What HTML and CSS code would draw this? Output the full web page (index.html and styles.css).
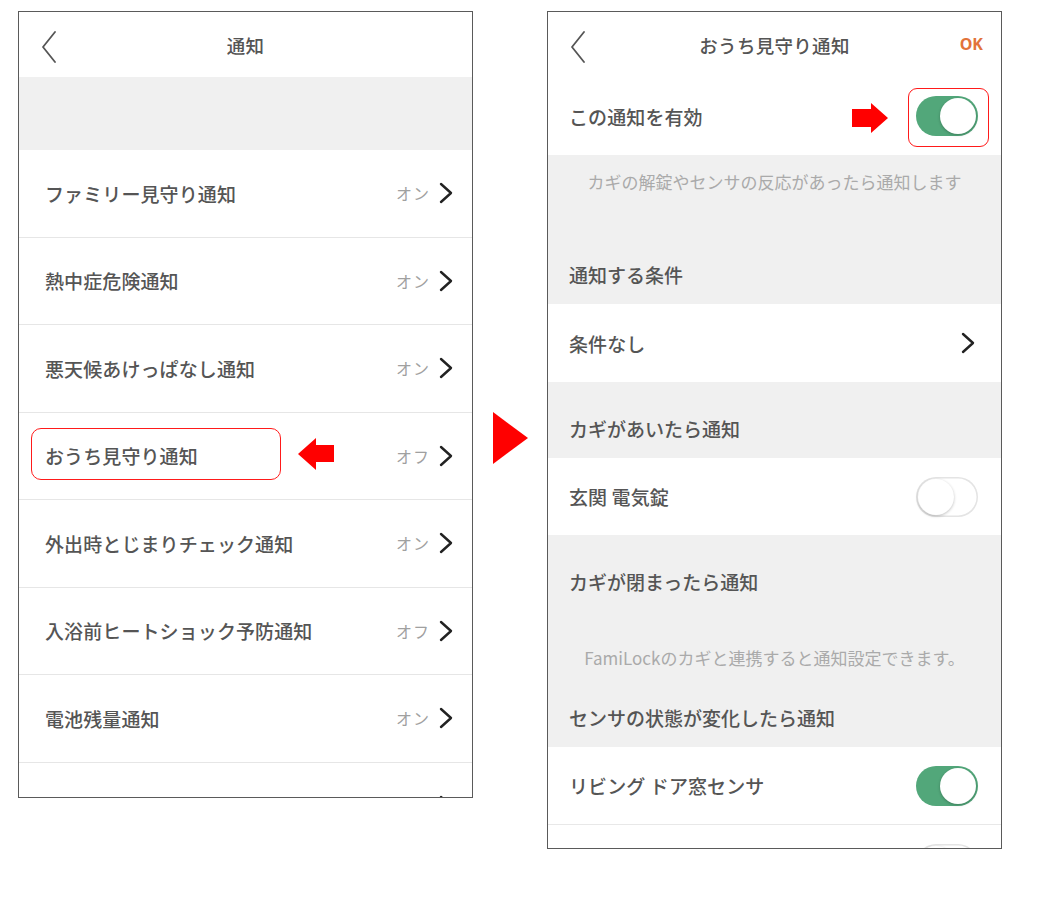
FILE: index.html
```html
<!DOCTYPE html>
<html lang="ja">
<head>
<meta charset="utf-8">
<title>通知</title>
<link rel="stylesheet" href="styles.css">
</head>
<body>
<div class="stage">
  <section class="phone phone-left">
    <header class="nav">
      <svg class="back" width="16" height="32" viewBox="0 0 16 32"><polyline points="14,1 2,16 14,31" fill="none" stroke="#555" stroke-width="1.8" stroke-linecap="round" stroke-linejoin="round"/></svg>
      <div class="nav-title">通知</div>
    </header>
    <div class="spacer-gray"></div>
    <div class="list-row"><span class="label">ファミリー見守り通知</span><span class="value">オン</span><svg class="chev" width="14" height="22" viewBox="0 0 14 22"><polyline points="2,2 12,11 2,20" fill="none" stroke="#222" stroke-width="2.4" stroke-linecap="round" stroke-linejoin="round"/></svg></div>
    <div class="list-row"><span class="label">熱中症危険通知</span><span class="value">オン</span><svg class="chev" width="14" height="22" viewBox="0 0 14 22"><polyline points="2,2 12,11 2,20" fill="none" stroke="#222" stroke-width="2.4" stroke-linecap="round" stroke-linejoin="round"/></svg></div>
    <div class="list-row"><span class="label">悪天候あけっぱなし通知</span><span class="value">オン</span><svg class="chev" width="14" height="22" viewBox="0 0 14 22"><polyline points="2,2 12,11 2,20" fill="none" stroke="#222" stroke-width="2.4" stroke-linecap="round" stroke-linejoin="round"/></svg></div>
    <div class="list-row"><span class="label">おうち見守り通知</span><span class="value">オフ</span><svg class="chev" width="14" height="22" viewBox="0 0 14 22"><polyline points="2,2 12,11 2,20" fill="none" stroke="#222" stroke-width="2.4" stroke-linecap="round" stroke-linejoin="round"/></svg>
      <div class="highlight highlight-left"></div>
      <svg class="arrow arrow-left" width="36" height="32" viewBox="0 0 36 32"><polygon points="0,16 18,0 18,7 36,7 36,24 18,24 18,32" fill="#ff0000"/></svg>
    </div>
    <div class="list-row"><span class="label">外出時とじまりチェック通知</span><span class="value">オン</span><svg class="chev" width="14" height="22" viewBox="0 0 14 22"><polyline points="2,2 12,11 2,20" fill="none" stroke="#222" stroke-width="2.4" stroke-linecap="round" stroke-linejoin="round"/></svg></div>
    <div class="list-row"><span class="label">入浴前ヒートショック予防通知</span><span class="value">オフ</span><svg class="chev" width="14" height="22" viewBox="0 0 14 22"><polyline points="2,2 12,11 2,20" fill="none" stroke="#222" stroke-width="2.4" stroke-linecap="round" stroke-linejoin="round"/></svg></div>
    <div class="list-row"><span class="label">電池残量通知</span><span class="value">オン</span><svg class="chev" width="14" height="22" viewBox="0 0 14 22"><polyline points="2,2 12,11 2,20" fill="none" stroke="#222" stroke-width="2.4" stroke-linecap="round" stroke-linejoin="round"/></svg></div>
    <div class="list-row"><span class="label"></span><svg class="chev" width="14" height="22" viewBox="0 0 14 22"><polyline points="2,2 12,11 2,20" fill="none" stroke="#222" stroke-width="2.4" stroke-linecap="round" stroke-linejoin="round"/></svg></div>
  </section>

  <div class="between">
    <svg width="35" height="52" viewBox="0 0 35 52"><polygon points="0,0 35,26 0,52" fill="#ff0000"/></svg>
  </div>

  <section class="phone phone-right">
    <header class="nav">
      <svg class="back" width="16" height="32" viewBox="0 0 16 32"><polyline points="14,1 2,16 14,31" fill="none" stroke="#555" stroke-width="1.8" stroke-linecap="round" stroke-linejoin="round"/></svg>
      <div class="nav-title">おうち見守り通知</div>
      <div class="nav-ok">OK</div>
    </header>
    <div class="set-row set-row-first">
      <span class="label">この通知を有効</span>
      <span class="toggle on"><span class="knob"></span></span>
      <svg class="arrow arrow-right" width="36" height="30" viewBox="0 0 36 30"><polygon points="0,6 19,6 19,0 36,15 19,30 19,24 0,24" fill="#ff0000"/></svg>
      <div class="highlight highlight-right"></div>
    </div>
    <div class="note note-top">カギの解錠やセンサの反応があったら通知します</div>
    <div class="sec-title">通知する条件</div>
    <div class="set-row"><span class="label">条件なし</span><svg class="chev chev-r" width="14" height="22" viewBox="0 0 14 22"><polyline points="2,2 12,11 2,20" fill="none" stroke="#222" stroke-width="2.4" stroke-linecap="round" stroke-linejoin="round"/></svg></div>
    <div class="sec-title">カギがあいたら通知</div>
    <div class="set-row set-row-77"><span class="label">玄関 電気錠</span><span class="toggle off"><span class="knob"></span></span></div>
    <div class="sec-title">カギが閉まったら通知</div>
    <div class="note note-mid">FamiLockのカギと連携すると通知設定できます。</div>
    <div class="sec-title">センサの状態が変化したら通知</div>
    <div class="set-row set-row-77 divided"><span class="label">リビング ドア窓センサ</span><span class="toggle on"><span class="knob"></span></span></div>
    <div class="set-row"><span class="label"></span><span class="toggle off"><span class="knob"></span></span></div>
  </section>
</div>
</body>
</html>
```

FILE: styles.css
```css
* { box-sizing: border-box; }
html, body { margin: 0; padding: 0; background: #fff; }
body {
  width: 1058px;
  height: 906px;
  overflow: hidden;
  font-family: "Noto Sans CJK JP", "Noto Sans", sans-serif;
  color: #555;
}
.stage {
  display: flex;
  align-items: flex-start;
  padding: 11px 0 0 18px;
}
.phone {
  width: 455px;
  border: 1px solid #5a5a5a;
  background: #fff;
  overflow: hidden;
  display: flex;
  flex-direction: column;
}
.phone-left { height: 787px; }
.phone-right { height: 838px; }
.between {
  width: 74px;
  display: flex;
  justify-content: center;
  padding-top: 401px;
}
.nav {
  position: relative;
  height: 65px;
  flex: none;
  display: flex;
  align-items: center;
  justify-content: center;
}
.back { position: absolute; left: 22px; top: 19px; }
.nav-title {
  font-size: 18.5px;
  font-weight: 500;
  color: #555;
  letter-spacing: 0.3px;
}
.nav-ok {
  position: absolute;
  right: 18px;
  top: 21px;
  font-family: "Noto Sans", sans-serif;
  font-weight: 700;
  font-size: 16px;
  color: #e2733a;
}
.spacer-gray { height: 73px; flex: none; background: #f0f0f0; }
.list-row {
  position: relative;
  height: 87.5px;
  flex: none;
  display: flex;
  align-items: center;
  padding: 0 19px 0 26px;
  border-bottom: 1px solid #e6e6e6;
}
.label {
  font-size: 19px;
  font-weight: 500;
  color: #555;
  flex: 1;
  letter-spacing: 0.1px;
}
.value {
  font-size: 16px;
  color: #a0a0a0;
  margin-right: 9px;
  letter-spacing: 1px;
}
.chev { flex: none; }
.highlight {
  position: absolute;
  border: 1.6px solid #ff1a1a;
  border-radius: 10px;
}
.highlight-left { left: 12px; top: 15px; width: 250px; height: 52px; }
.arrow { position: absolute; }
.arrow-left { left: 279px; top: 25px; }
.set-row {
  position: relative;
  height: 78px;
  flex: none;
  display: flex;
  align-items: center;
  padding: 0 23px 0 21px;
  background: #fff;
}
.set-row-77 { height: 77px; }
.divided { border-bottom: 1px solid #e8e8e8; height: 78px; }
.chev-r { margin-right: 3px; }
.arrow-right { left: 304px; top: 26px; }
.highlight-right { left: 360px; top: 11px; width: 81px; height: 59px; border-radius: 9px; }
.note {
  flex: none;
  background: #f0f0f0;
  text-align: center;
  font-size: 17px;
  color: #aaa;
  line-height: 22px;
}
.note-top { height: 73px; padding-top: 16px; }
.note-mid { height: 60px; padding-top: 36px; }
.sec-title {
  flex: none;
  height: 76px;
  background: #f0f0f0;
  display: flex;
  align-items: flex-end;
  padding: 0 0 18px 21px;
  font-size: 19px;
  font-weight: 500;
  color: #555;
  line-height: 22px;
}
.toggle {
  position: relative;
  flex: none;
  width: 62px;
  height: 40px;
  border-radius: 20px;
}
.toggle.on { background: #52a77a; }
.toggle.off { background: #fff; box-shadow: inset 0 0 0 1.5px #e4e4e4; }
.knob {
  position: absolute;
  top: 2px;
  width: 36px;
  height: 36px;
  border-radius: 50%;
  background: #fff;
  box-shadow: 0 1px 3px rgba(0,0,0,0.25);
}
.toggle.on .knob { right: 2px; }
.toggle.off .knob { left: 2px; }
```
